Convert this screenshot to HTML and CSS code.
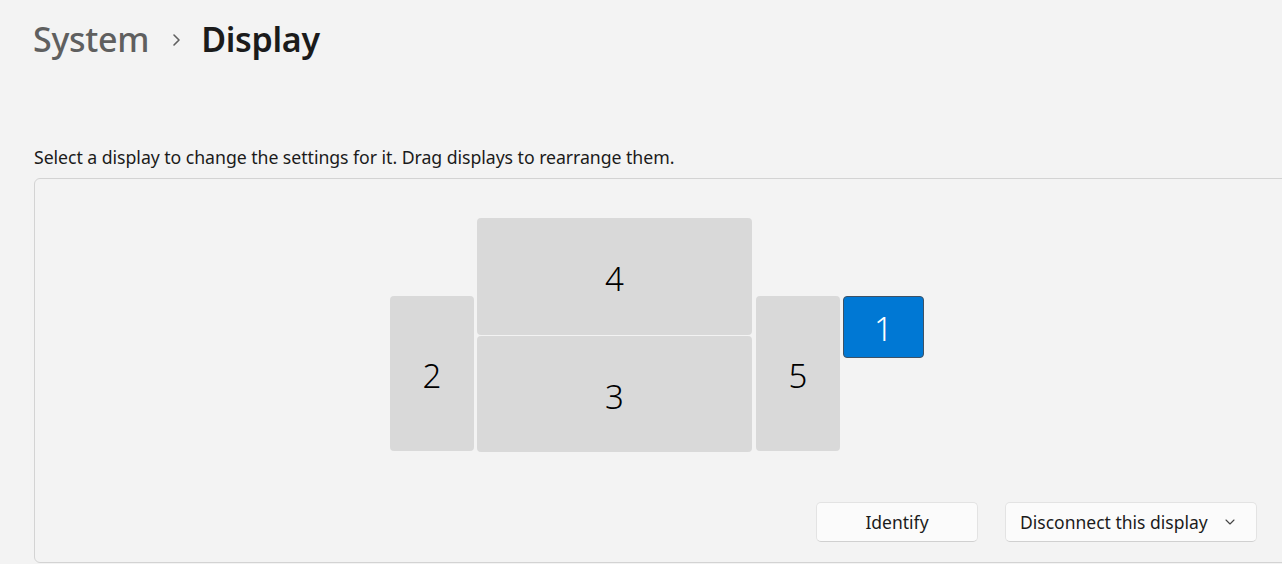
FILE: index.html
```html
<!DOCTYPE html>
<html>
<head>
<meta name="viewport" content="width=device-width, initial-scale=1.0">
<link rel="stylesheet" href="styles.css">
</head>
<body>

<div class='crumbs'>
  <span class='crumb'>System</span>
  <span class='sep'>
    <svg width="10" height="14" viewBox="0 0 10 14"><path d="M3 2 L8 7 L3 12" fill="none" stroke="#5f5f5f" stroke-width="1.6" stroke-linecap="round" stroke-linejoin="round"/></svg>
  </span>
  <span class='crumb current'>Display</span>
</div>

<div class='hint'>Select a display to change the settings for it. Drag displays to rearrange them.</div>

<div class='card'>
  <div class='canvas'>
    <div class='mon' style="left:0px; top:78px; width:84px; height:155px;">2</div>
    <div class='mon' style="left:87px; top:0px; width:275px; height:117px;">4</div>
    <div class='mon' style="left:87px; top:118px; width:275px; height:116px;">3</div>
    <div class='mon' style="left:366px; top:78px; width:84px; height:155px;">5</div>
    <div class='mon sel' style="left:453px; top:78px; width:81px; height:62px;">1</div>
  </div>

  <div class='actions'>
    <button class='btn ident'>Identify</button>
    <button class='btn drop'>
      <span>Disconnect this display</span>
      <svg width="12" height="8" viewBox="0 0 12 8"><path d="M2 2 L6 6 L10 2" fill="none" stroke="#444" stroke-width="1.1" stroke-linecap="round" stroke-linejoin="round"/></svg>
    </button>
  </div>
</div>

</body>
</html>
```

FILE: styles.css
```css
* {box-sizing: border-box;}
body {margin: 0; background: #f3f3f3; font-family: "Noto Sans", "Open Sans", sans-serif; color: #1b1b1b; overflow: hidden;}

.crumbs {display: flex; align-items: center; height: 80px; padding-left: 33px; padding-bottom: 2px;}
.crumb {font-size: 34px; font-weight: 500; color: #5f5f5f; letter-spacing: -0.3px;}
.crumb.current {color: #1b1b1b; font-weight: 600;}
.sep {display: flex; align-items: center; margin: 0 20px 0 22px; padding-top: 2px;}

.hint {margin: 65px 0 0 34px; font-size: 17.7px; color: #1b1b1b; height: 33px; letter-spacing: -0.05px;}

.card {margin-left: 34px; width: 1262px; border: 1px solid #d3d3d3; border-radius: 6px; background: #f3f3f3; padding: 39px 38px 20px 0;}
.canvas {position: relative; width: 534px; height: 234px; margin-left: 355px;}
.mon {position: absolute; background: #d9d9d9; border-radius: 4px; display: flex; align-items: center; justify-content: center; font-size: 33px; font-weight: 300; color: #000; padding-top: 4px;}
.sel {background: #0078d4; color: #fff; border: 1px solid #3d5266; padding-top: 2px;}

.actions {display: flex; justify-content: flex-end; gap: 27px; margin-top: 50px;}
.btn {font-family: inherit; font-size: 17.5px; color: #1b1b1b; background: #fbfbfb; border: 1px solid #e3e3e3; border-bottom-color: #d0d0d0; border-radius: 5px; height: 40px; display: flex; align-items: center; justify-content: center;}
.ident {width: 162px;}
.drop {width: 252px; justify-content: space-between; padding: 0 20px 0 14px;}
```
